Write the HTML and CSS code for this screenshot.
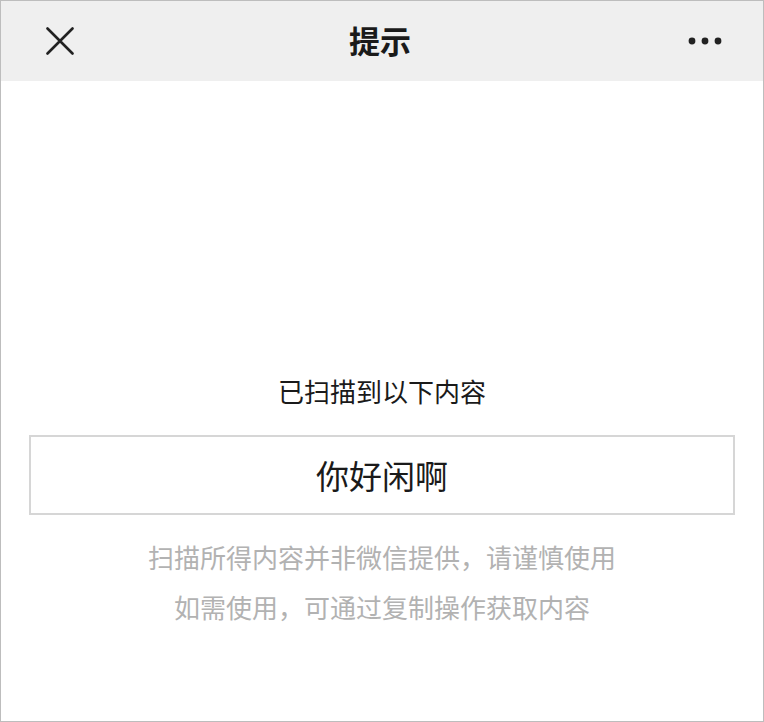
FILE: index.html
```html
<!DOCTYPE html>
<html lang="zh-CN">
<head>
    <meta charset="UTF-8">
    <meta name="viewport" content="width=device-width, initial-scale=1.0">
    <title>提示</title>
    <link rel="stylesheet" href="styles.css">
</head>
<body>

    <div class="page">
        <div class="header">
            <div class="header-left">
                <svg class="icon-close" width="28" height="28" viewBox="0 0 28 28">
                    <path d="M1.5 1.5 L26.5 26.5 M26.5 1.5 L1.5 26.5" stroke="#222" stroke-width="2.6" stroke-linecap="round" fill="none"/>
                </svg>
            </div>
            <h1 class="title">提示</h1>
            <div class="header-right">
                <svg class="icon-more" width="34" height="8" viewBox="0 0 34 8">
                    <circle cx="4" cy="4" r="3.4" fill="#222"/>
                    <circle cx="17" cy="4" r="3.4" fill="#222"/>
                    <circle cx="30" cy="4" r="3.4" fill="#222"/>
                </svg>
            </div>
        </div>

        <div class="content">
            <p class="label">已扫描到以下内容</p>
            <div class="result-box">你好闲啊</div>
            <p class="note">扫描所得内容并非微信提供，请谨慎使用</p>
            <p class="note">如需使用，可通过复制操作获取内容</p>
        </div>
    </div>

</body>
</html>
```

FILE: styles.css
```css
body {
    margin: 0;
    padding: 0;
    background-color: #fff;
    font-family: "Noto Sans CJK SC", "Noto Sans", sans-serif;
    color: #1a1a1a;
}
.page {
    width: 764px;
    height: 722px;
    box-sizing: border-box;
    border: 1px solid #bdbdbd;
    background: #fff;
}
.header {
    height: 80px;
    background-color: #efefef;
    display: grid;
    grid-template-columns: 1fr auto 1fr;
    align-items: center;
}
.header-left {
    padding-left: 45px;
    display: flex;
}
.header-right {
    padding-right: 41px;
    display: flex;
    justify-content: flex-end;
}
.title {
    margin: -3px 0 0 -4px;
    font-size: 31px;
    font-weight: bold;
    line-height: 40px;
    color: #1a1a1a;
}
.content {
    padding: 292px 28px 0;
    text-align: center;
}
.label {
    margin: 0;
    font-size: 26px;
    line-height: 36px;
    color: #1a1a1a;
}
.result-box {
    margin-top: 26px;
    height: 80px;
    box-sizing: border-box;
    border: 2px solid #d6d6d6;
    display: flex;
    align-items: center;
    justify-content: center;
    font-size: 33px;
    color: #1a1a1a;
}
.result-box + .note {
    margin-top: 17px;
}
.note {
    margin: 0;
    font-size: 26px;
    line-height: 50px;
    color: #b2b2b2;
}
```
